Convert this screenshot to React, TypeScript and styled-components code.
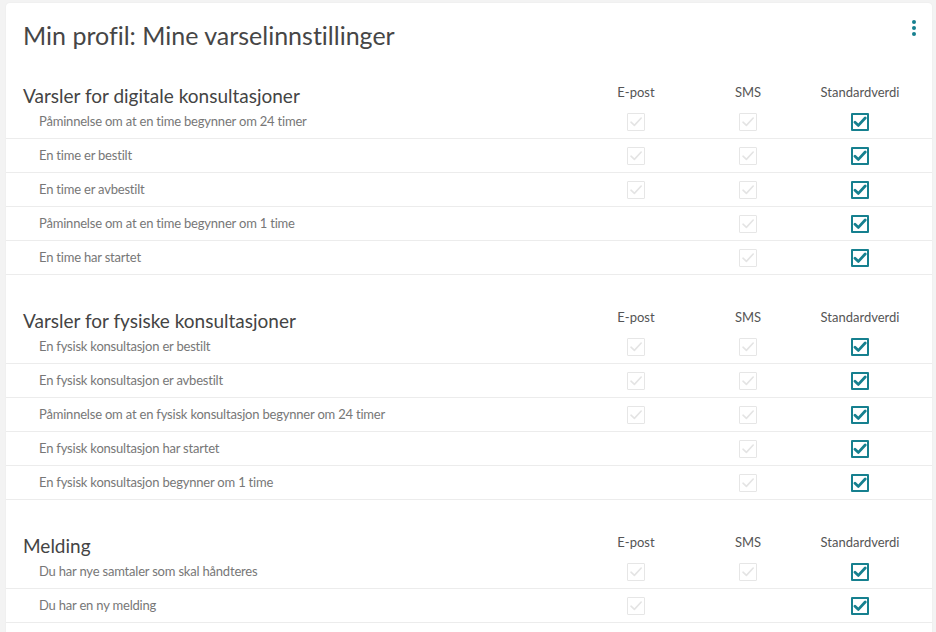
import { FC } from "react";
import styled, { createGlobalStyle } from "styled-components";

const GlobalStyle = createGlobalStyle`
  html, body {
    margin: 0;
    padding: 0;
    background: #f3f3f3;
    font-family: "Lato", "Noto Sans", sans-serif;
    font-variant-ligatures: none;
  }
`;

type Row = { label: string; email: boolean; sms: boolean };
type Section = { title: string; rows: Row[] };

const sections: Section[] = [
  {
    title: "Varsler for digitale konsultasjoner",
    rows: [
      { label: "Påminnelse om at en time begynner om 24 timer", email: true, sms: true },
      { label: "En time er bestilt", email: true, sms: true },
      { label: "En time er avbestilt", email: true, sms: true },
      { label: "Påminnelse om at en time begynner om 1 time", email: false, sms: true },
      { label: "En time har startet", email: false, sms: true },
    ],
  },
  {
    title: "Varsler for fysiske konsultasjoner",
    rows: [
      { label: "En fysisk konsultasjon er bestilt", email: true, sms: true },
      { label: "En fysisk konsultasjon er avbestilt", email: true, sms: true },
      { label: "Påminnelse om at en fysisk konsultasjon begynner om 24 timer", email: true, sms: true },
      { label: "En fysisk konsultasjon har startet", email: false, sms: true },
      { label: "En fysisk konsultasjon begynner om 1 time", email: false, sms: true },
    ],
  },
  {
    title: "Melding",
    rows: [
      { label: "Du har nye samtaler som skal håndteres", email: true, sms: true },
      { label: "Du har en ny melding", email: true, sms: false },
    ],
  },
];

const CheckBox: FC<{ disabled?: boolean }> = ({ disabled }) => (
  <Box $disabled={disabled}>
    <svg width="14" height="14" viewBox="0 0 14 14">
      <path
        d="M2 7.2 L5.4 10.4 L12.2 3"
        fill="none"
        stroke={disabled ? "#e4e4e4" : "#16808f"}
        strokeWidth={disabled ? 1.6 : 2.8}
        strokeLinecap="round"
        strokeLinejoin="round"
      />
    </svg>
  </Box>
);

const App: FC = () => {
  return (
    <Page>
      <GlobalStyle />
      <Card>
        <Header>
          <Title>Min profil: Mine varselinnstillinger</Title>
          <Kebab aria-label="Meny">
            <span />
            <span />
            <span />
          </Kebab>
        </Header>

        {sections.map((section) => (
          <SectionBlock key={section.title}>
            <HeadRow>
              <SectionTitle>{section.title}</SectionTitle>
              <ColLabel>E-post</ColLabel>
              <ColLabel>SMS</ColLabel>
              <ColLabel>Standardverdi</ColLabel>
            </HeadRow>
            {section.rows.map((row) => (
              <ItemRow key={row.label}>
                <ItemLabel>{row.label}</ItemLabel>
                <Cell>{row.email && <CheckBox disabled />}</Cell>
                <Cell>{row.sms && <CheckBox disabled />}</Cell>
                <Cell>
                  <CheckBox />
                </Cell>
              </ItemRow>
            ))}
          </SectionBlock>
        ))}
      </Card>
    </Page>
  );
};

const Page = styled.div`
  min-height: 632px;
  padding: 3px 4px 0 6px;
  box-sizing: border-box;
`;

const Card = styled.div`
  background: #ffffff;
  border-radius: 4px 4px 0 0;
  box-shadow: 0 0 2px rgba(0, 0, 0, 0.06);
  padding-bottom: 20px;
`;

const Header = styled.div`
  display: flex;
  justify-content: space-between;
  align-items: flex-start;
  height: 77px;
  padding: 0 14px 0 17px;
`;

const Title = styled.h1`
  margin: 15px 0 0;
  font-size: 25px;
  line-height: 34px;
  font-weight: 400;
  color: #464646;
`;

const Kebab = styled.button`
  display: flex;
  flex-direction: column;
  align-items: center;
  gap: 2px;
  margin-top: 17px;
  padding: 0;
  width: 8px;
  border: none;
  background: none;
  cursor: pointer;

  span {
    width: 4px;
    height: 4px;
    border-radius: 50%;
    background: #16808f;
  }
`;

const SectionBlock = styled.div`
  margin-bottom: 30px;
`;

const grid = `
  display: grid;
  grid-template-columns: 1fr 112px 112px 112px;
  padding-right: 16px;
`;

const HeadRow = styled.div`
  ${grid};
  height: 25px;
  padding-left: 17px;
  align-items: start;
`;

const SectionTitle = styled.h2`
  margin: 0;
  padding-top: 3px;
  font-size: 19px;
  line-height: 25px;
  font-weight: 400;
  color: #444444;
`;

const ColLabel = styled.div`
  text-align: center;
  font-size: 13px;
  line-height: 24px;
  color: #555555;
`;

const ItemRow = styled.div`
  ${grid};
  height: 34px;
  padding-left: 33px;
  align-items: center;
  border-bottom: 1px solid #ececec;
  box-sizing: border-box;
`;

const ItemLabel = styled.div`
  font-size: 13px;
  letter-spacing: -0.2px;
  color: #777777;
  padding-bottom: 1px;
`;

const Cell = styled.div`
  display: flex;
  justify-content: center;
  align-items: center;
`;

const Box = styled.div<{ $disabled?: boolean }>`
  width: 18px;
  height: 18px;
  box-sizing: border-box;
  display: flex;
  align-items: center;
  justify-content: center;
  border: ${(p) => (p.$disabled ? "1.5px solid #e6e6e6" : "2px solid #16808f")};
  border-radius: 1px;
  background: #ffffff;
`;

export default App;
